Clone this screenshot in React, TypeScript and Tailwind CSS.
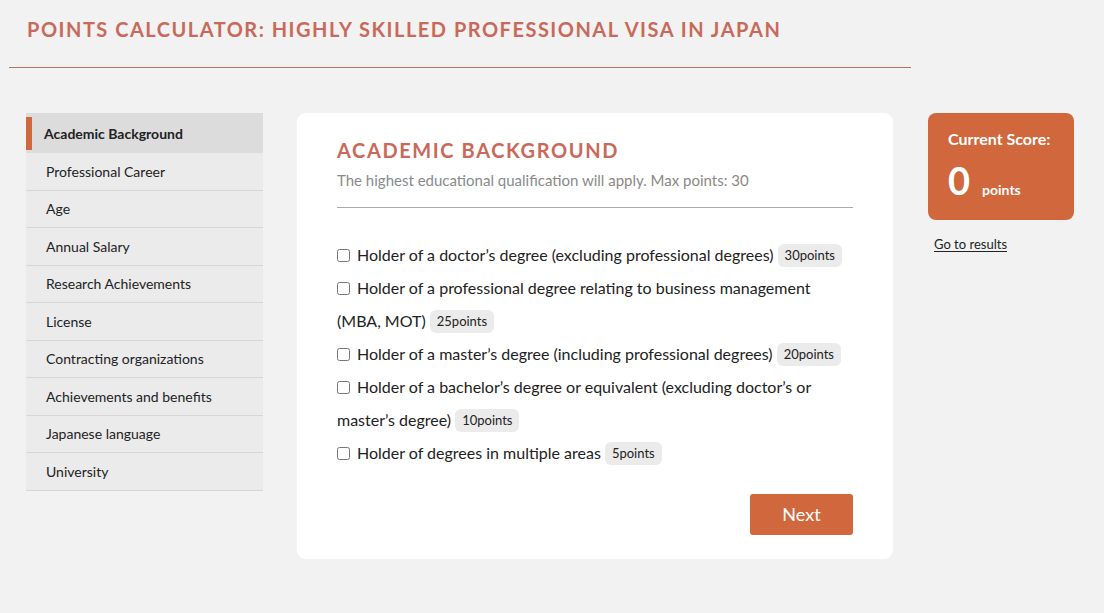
const sections = [
  "Academic Background",
  "Professional Career",
  "Age",
  "Annual Salary",
  "Research Achievements",
  "License",
  "Contracting organizations",
  "Achievements and benefits",
  "Japanese language",
  "University",
];

const options = [
  { label: "Holder of a doctor’s degree (excluding professional degrees)", points: 30 },
  { label: "Holder of a professional degree relating to business management (MBA, MOT)", points: 25 },
  { label: "Holder of a master’s degree (including professional degrees)", points: 20 },
  { label: "Holder of a bachelor’s degree or equivalent (excluding doctor’s or master’s degree)", points: 10 },
  { label: "Holder of degrees in multiple areas", points: 5 },
];

export default function App() {
  return (
    <div className="min-h-[613px] bg-[#f2f2f2] font-['Lato','Noto_Sans',sans-serif] text-[#222]">
      <header className="w-[902px] ml-[9px] border-b border-[#b8735e] pl-[18px] pt-[17px] pb-[26px]">
        <h1 className="text-[20px] leading-[24px] font-bold tracking-[1.5px] text-[#c8695a]">
          POINTS CALCULATOR: HIGHLY SKILLED PROFESSIONAL VISA IN JAPAN
        </h1>
      </header>

      <div className="flex items-start mt-[45px] pl-[26px]">
        <nav className="w-[237px] flex flex-col">
          {sections.map((s, i) =>
            i === 0 ? (
              <div key={s} className="h-[40px] bg-[#dcdcdc] flex items-center relative">
                <span className="absolute left-0 top-[4px] bottom-[3px] w-[6px] bg-[#d0673d]" />
                <span className="pl-[18px] text-[14px] font-bold">{s}</span>
              </div>
            ) : (
              <div
                key={s}
                className="h-[37.5px] bg-[#ebebeb] border-b border-[#d6d6d6] flex items-center pl-[20px] text-[14px]"
              >
                {s}
              </div>
            )
          )}
        </nav>

        <main className="ml-[34px] w-[596px] h-[446px] bg-white rounded-[9px] px-[40px] pt-[25px] flex flex-col">
          <h2 className="text-[20px] leading-[24px] font-bold tracking-[1.6px] text-[#c8695a]">
            ACADEMIC BACKGROUND
          </h2>
          <p className="mt-[8px] text-[15px] leading-[20px] text-[#8a8a8a]">
            The highest educational qualification will apply. Max points: 30
          </p>
          <div className="mt-[17px] border-b border-[#aaa]" />

          <div className="mt-[30px] flex flex-col">
            {options.map((o) => (
              <div key={o.label} className="text-[16px] leading-[33px] pr-[6px]">
                <input
                  type="checkbox"
                  className="w-[13px] h-[13px] mr-[7px] align-[-1px] accent-[#d0673d]"
                />
                <span>{o.label}</span>
                <span className="inline-block ml-[4px] bg-[#ebebeb] rounded-[6px] px-[7px] text-[13px] leading-[23px] align-[1px]">
                  {o.points}points
                </span>
              </div>
            ))}
          </div>

          <div className="flex justify-end mt-[25px]">
            <button className="w-[103px] h-[41px] bg-[#d0673d] rounded-[3px] text-white text-[18px]">
              Next
            </button>
          </div>
        </main>

        <aside className="ml-[35px] w-[146px]">
          <div className="h-[107px] bg-[#d0673d] rounded-[8px] text-white pl-[20px] pt-[16px]">
            <div className="text-[16px] leading-[20px] font-bold">Current Score:</div>
            <div className="flex items-baseline mt-[9px]">
              <span className="text-[38px] leading-[44px] font-bold">0</span>
              <span className="ml-[12px] text-[14px] font-bold">points</span>
            </div>
          </div>
          <a href="#" className="block mt-[15px] ml-[6px] text-[13px] underline underline-offset-2">
            Go to results
          </a>
        </aside>
      </div>
    </div>
  );
}
